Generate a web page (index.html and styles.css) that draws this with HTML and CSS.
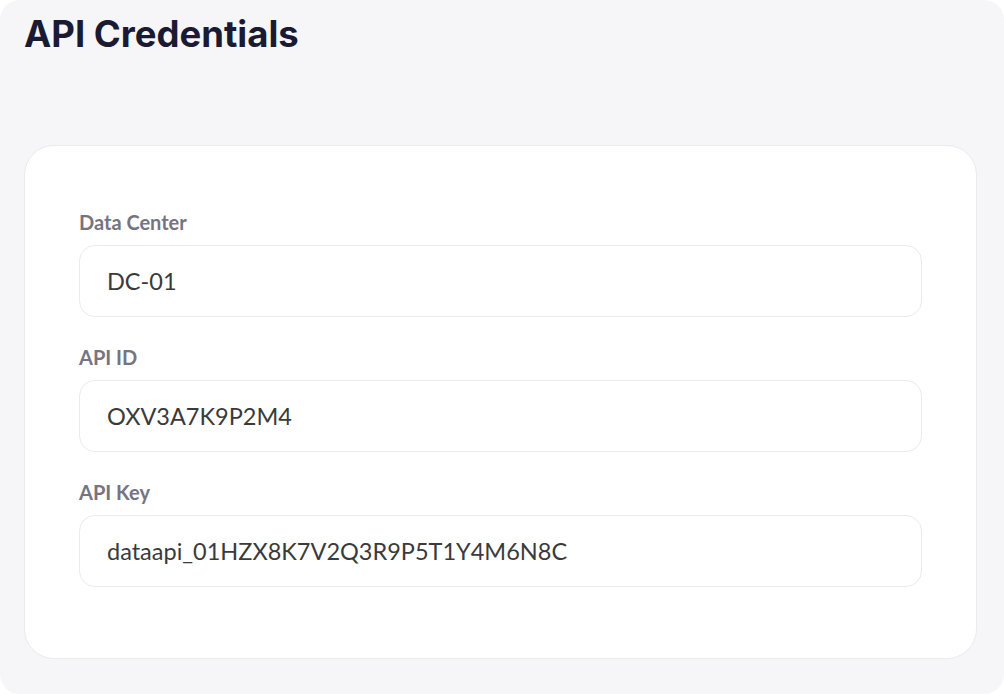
FILE: index.html
```html
<!DOCTYPE html>
<html lang="en">
<head>
    <meta charset="UTF-8">
    <title>API Credentials</title>
    <link rel="stylesheet" href="styles.css">
</head>
<body>
<div class="panel">
    <h1 class="title">API Credentials</h1>
    <div class="card">
        <div class="field">
            <label class="field-label" for="dc">Data Center</label>
            <input class="field-input" id="dc" type="text" value="DC-01" readonly>
        </div>
        <div class="field">
            <label class="field-label" for="api-id">API ID</label>
            <input class="field-input" id="api-id" type="text" value="OXV3A7K9P2M4" readonly>
        </div>
        <div class="field">
            <label class="field-label" for="api-key">API Key</label>
            <input class="field-input" id="api-key" type="text" value="dataapi_01HZX8K7V2Q3R9P5T1Y4M6N8C" readonly>
        </div>
    </div>
</div>
</body>
</html>
```

FILE: styles.css
```css
html, body {
    margin: 0;
    padding: 0;
    background: #fff;
}

.panel {
    box-sizing: border-box;
    height: 694px;
    padding: 12px 27px 0 24px;
    background: #f6f6f8;
    border-radius: 20px;
}

.title {
    margin: 0 0 89px;
    font-family: Inter, "Liberation Sans", sans-serif;
    font-size: 36.5px;
    font-weight: 700;
    line-height: 44px;
    color: #1b1a33;
}

.card {
    display: flex;
    flex-direction: column;
    gap: 29px;
    padding: 65px 54px 71px;
    background: #fff;
    border: 1px solid #ebebee;
    border-radius: 30px;
}

.field {
    display: flex;
    flex-direction: column;
}

.field-label {
    margin-bottom: 12px;
    font-family: Lato, "Liberation Sans", sans-serif;
    font-size: 20px;
    font-weight: 700;
    line-height: 22px;
    color: #75747f;
}

.field-input {
    box-sizing: border-box;
    height: 72px;
    padding: 0 27px;
    font-family: Lato, "Liberation Sans", sans-serif;
    font-size: 23.5px;
    color: #3a3a3a;
    background: #fff;
    border: 1px solid #ebebee;
    border-radius: 16px;
    outline: none;
}
```
